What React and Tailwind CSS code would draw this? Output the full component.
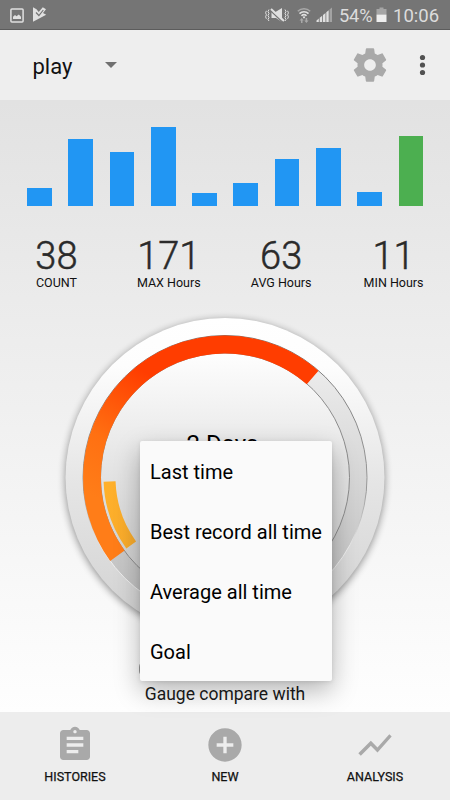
import React from "react";

const BARS = [18.5, 67.5, 54.5, 79.5, 13.5, 23, 47, 58.5, 14.5, 70.5];

const STATS = [
  { value: "38", label: "COUNT", cell: "w-[112px]" },
  { value: "171", label: "MAX Hours", cell: "w-[113px]" },
  { value: "63", label: "AVG Hours", cell: "w-[112px]" },
  { value: "11", label: "MIN Hours", cell: "w-[113px]" },
];

const MENU = ["Last time", "Best record all time", "Average all time", "Goal"];

const TABS = [
  {
    label: "HISTORIES",
    path: "M19 3h-4.18C14.4 1.84 13.3 1 12 1c-1.3 0-2.4.84-2.82 2H5c-1.1 0-2 .9-2 2v14c0 1.1.9 2 2 2h14c1.1 0 2-.9 2-2V5c0-1.1-.9-2-2-2zm-7 0c.55 0 1 .45 1 1s-.45 1-1 1-1-.45-1-1 .45-1 1-1zm2 14H7v-2h7v2zm3-4H7v-2h10v2zm0-4H7V7h10v2z",
  },
  {
    label: "NEW",
    path: "M12 2C6.48 2 2 6.48 2 12s4.48 10 10 10 10-4.48 10-10S17.52 2 12 2zm5 11h-4v4h-2v-4H7v-2h4V7h2v4h4v2z",
  },
  {
    label: "ANALYSIS",
    path: "M3.5 18.49l6-6.01 4 4L22 6.92l-1.41-1.41-7.09 7.97-4-4L2 16.99z",
  },
];

function polar(r, deg) {
  const a = (deg * Math.PI) / 180;
  return `${(160 + r * Math.cos(a)).toFixed(2)} ${(160 + r * Math.sin(a)).toFixed(2)}`;
}

function arc(r, from, to) {
  return `M${polar(r, from)}A${r} ${r} 0 ${to - from > 180 ? 1 : 0} 1 ${polar(r, to)}`;
}

function StatusBar() {
  return (
    <div className="flex h-[30px] shrink-0 items-center border-b border-[#5c5c5c] bg-[#757575] pl-[10px] pr-[10px] text-[#dcdcdc]">
      <svg className="mt-[1px]" width="14" height="15" viewBox="0 0 14 15">
        <rect x="0.9" y="0.9" width="12.2" height="13.2" rx="1" fill="none" stroke="#e0e0e0" strokeWidth="1.5" />
        <path d="M3 11V8.7L5 7l1.5 1.2L8.8 6.5 11 8.7V11z" fill="#e0e0e0" />
      </svg>
      <svg className="ml-[9px]" width="14" height="15" viewBox="0 0 14 15">
        <path d="M0 .3L3.5 2.2 5.7 5 9.8.3 13 2.3 10 6l3.2 1.7L0 14.8z" fill="#e0e0e0" />
        <path d="M3 5.5l2.9 3L10.3 3" fill="none" stroke="#757575" strokeWidth="1.2" />
      </svg>
      <div className="flex-1" />
      <svg className="mt-[1px]" width="24" height="17" viewBox="0 0 24 17">
        <path d="M6.5 5.2h3.5L17 1v14l-6-4H6.5z" fill="#e0e0e0" />
        <path d="M4.6 2.8L18 15.4" stroke="#757575" strokeWidth="1.4" />
        <path d="M6 2L19 14" stroke="#e0e0e0" strokeWidth="2" />
        <path d="M4 2.5l-1 2 1 2-1 2 1 2-1 2 1 1.5M1.4 3.8l-.8 2 .8 2-.8 2 .8 2M20 2.5l1 2-1 2 1 2-1 2 1 2-1 1.5M22.6 3.8l.8 2-.8 2 .8 2-.8 2" fill="none" stroke="#e0e0e0" strokeWidth="1" />
      </svg>
      <svg className="mt-[1px] ml-[8px]" width="14" height="17" viewBox="0 0 14 17">
        <path d="M.8 4.2a9 9 0 0112.4 0" fill="none" stroke="#a9a9a9" strokeWidth="1.5" />
        <path d="M2.5 6.6a6.4 6.4 0 019 0M4.5 8.8a3.6 3.6 0 015 0" fill="none" stroke="#e0e0e0" strokeWidth="1.6" />
        <circle cx="7" cy="10.3" r="1.1" fill="#e0e0e0" />
        <path d="M2.5 13.5L4.7 11l2 2.5H5.5V16H4v-2.5zM7.3 13.5h1.3V11h1.6v2.5h1.3L9.4 16z" fill="#a9a9a9" />
      </svg>
      <svg className="mt-[1px] ml-[5px]" width="17" height="16" viewBox="0 0 17 16">
        <path d="M.5 15v-1.6l2.3-1.9V15zM3.7 15v-4.2l2.5-2V15zM7 15V8l2.5-2v9zM10.3 15V5.2l2.4-2V15z" fill="#e0e0e0" />
        <path d="M13.5 15V2.5L16 .5V15z" fill="#a3a3a3" />
      </svg>
      <span className="ml-[6px] w-[34px] whitespace-nowrap pt-[2px] text-[18.3px] leading-[30px] tracking-[-0.2px]">54%</span>
      <svg className="mt-[1px] ml-[3px]" width="11" height="16" viewBox="0 0 11 16">
        <path d="M.5 7.5V2h3V.5h4V2h3v5.5z" fill="#a5a5a5" />
        <path d="M.5 7.5h10V15H.5z" fill="#eee" />
      </svg>
      <span className="ml-[6px] w-[47px] whitespace-nowrap pt-[2px] text-[18.5px] leading-[30px]">10:06</span>
    </div>
  );
}

function Toolbar() {
  return (
    <div className="flex h-[70px] shrink-0 items-center bg-[#eeeeee]">
      <span className="ml-[32.5px] w-[72.5px] pt-[3px] text-[22px] leading-[30px] text-[#111]">play</span>
      <svg className="-mt-[1px]" width="12" height="6" viewBox="0 0 12 6">
        <path d="M0 0h12L6 6z" fill="#707070" />
      </svg>
      <div className="flex-1" />
      <svg width="40" height="40" viewBox="0 0 24 24" fill="#a9a9a9">
        <path d="M19.43 12.98c.04-.32.07-.64.07-.98s-.03-.66-.07-.98l2.11-1.65c.19-.15.24-.42.12-.64l-2-3.46c-.12-.22-.39-.3-.61-.22l-2.49 1c-.52-.4-1.08-.73-1.69-.98l-.38-2.65C14.46 2.18 14.25 2 14 2h-4c-.25 0-.46.18-.49.42l-.38 2.65c-.61.25-1.17.59-1.69.98l-2.49-1c-.23-.09-.49 0-.61.22l-2 3.46c-.13.22-.07.49.12.64l2.11 1.65c-.04.32-.07.65-.07.98s.03.66.07.98l-2.11 1.65c-.19.15-.24.42-.12.64l2 3.46c.12.22.39.3.61.22l2.49-1c.52.4 1.08.73 1.69.98l.38 2.65c.03.24.24.42.49.42h4c.25 0 .46-.18.49-.42l.38-2.65c.61-.25 1.17-.59 1.69-.98l2.49 1c.23.09.49 0 .61-.22l2-3.46c.12-.22.07-.49-.12-.64l-2.11-1.65zM12 15.5c-1.93 0-3.5-1.57-3.5-3.5s1.57-3.5 3.5-3.5 3.5 1.57 3.5 3.5-1.57 3.5-3.5 3.5z" />
      </svg>
      <svg className="ml-[29px] mr-[24px]" width="7" height="22" viewBox="0 0 7 22" fill="#515151">
        <circle cx="3.5" cy="3.5" r="2.6" />
        <circle cx="3.5" cy="11" r="2.6" />
        <circle cx="3.5" cy="18.5" r="2.6" />
      </svg>
    </div>
  );
}

function Gauge() {
  return (
    <svg className="ml-[65px] block overflow-visible" width="320" height="320" viewBox="0 0 320 320">
      <defs>
        <linearGradient id="rim" x1="0" y1="0" x2="0" y2="1">
          <stop offset="0" stopColor="#ffffff" />
          <stop offset="0.15" stopColor="#fdfdfd" />
          <stop offset="0.5" stopColor="#e6e6e6" />
          <stop offset="1" stopColor="#d0d0d0" />
        </linearGradient>
        <linearGradient id="track" x1="0" y1="0" x2="0" y2="1">
          <stop offset="0" stopColor="#f2f2f2" />
          <stop offset="0.5" stopColor="#d6d6d6" />
          <stop offset="1" stopColor="#bcbcbc" />
        </linearGradient>
        <linearGradient id="face" x1="0" y1="0" x2="0" y2="1">
          <stop offset="0" stopColor="#fefefe" />
          <stop offset="0.5" stopColor="#e2e2e2" />
          <stop offset="1" stopColor="#c8c8c8" />
        </linearGradient>
        <linearGradient id="edge" x1="0" y1="0" x2="0" y2="1">
          <stop offset="0" stopColor="#777777" />
          <stop offset="0.55" stopColor="#999999" />
          <stop offset="0.75" stopColor="#eeeeee" />
        </linearGradient>
        <linearGradient id="heat" gradientUnits="userSpaceOnUse" x1="30" y1="180" x2="110" y2="45">
          <stop offset="0" stopColor="#ff7d18" />
          <stop offset="0.35" stopColor="#ff7012" />
          <stop offset="0.85" stopColor="#ff3d00" />
        </linearGradient>
        <linearGradient id="amber" x1="0" y1="0" x2="1" y2="1">
          <stop offset="0" stopColor="#ffb02a" />
          <stop offset="1" stopColor="#f8ab2c" />
        </linearGradient>
        <filter id="soft" x="-10%" y="-10%" width="120%" height="120%">
          <feGaussianBlur stdDeviation="4.5" />
        </filter>
      </defs>
      <circle cx="160" cy="161.5" r="159" fill="#000" opacity="0.48" filter="url(#soft)" />
      <circle cx="160" cy="159.5" r="159.5" fill="url(#rim)" />
      <g transform="translate(0 -0.5)">
        <circle cx="160" cy="160" r="142" fill="url(#track)" stroke="url(#edge)" strokeWidth="1" />
        <circle cx="160" cy="160" r="124.5" fill="url(#face)" stroke="#8c8c8c" strokeWidth="1" />
        <path d={arc(133, 144, 311.2)} fill="none" stroke="url(#heat)" strokeWidth="17.8" />
        <path d={arc(115.5, 144.3, 178)} fill="none" stroke="url(#amber)" strokeWidth="12" />
      </g>
      <text x="157.5" y="134" textAnchor="middle" fontSize="24" fill="#000">2 Days</text>
    </svg>
  );
}

export default function App() {
  return (
    <div className="relative flex h-[800px] w-[450px] flex-col overflow-hidden bg-[#eeeeee] font-[Roboto,sans-serif]">
      <StatusBar />
      <Toolbar />
      <main className="flex h-[612px] shrink-0 flex-col bg-linear-to-b from-[#e2e2e2] to-[#fefefe]">
        <div className="ml-[27px] flex h-[106px] shrink-0 items-end gap-[16.6px]">
          {BARS.map((h, i) => (
            <div
              key={i}
              className={i === 9 ? "w-[24.7px] bg-[#4caf50]" : "w-[24.7px] bg-[#2196f3]"}
              style={{ height: h }}
            />
          ))}
        </div>
        <div className="mt-[31px] ml-[0.5px] flex h-[80.5px] shrink-0">
          {STATS.map((s) => (
            <div key={s.label} className={`flex flex-col items-center ${s.cell}`}>
              <span className="h-[38px] text-[38px] leading-[38px] font-light text-[#2a2a2a] [-webkit-text-stroke:0.5px_#2a2a2a]">{s.value}</span>
              <span className="text-[12.5px] leading-[15px] text-[#111]">{s.label}</span>
            </div>
          ))}
        </div>
        <div className="h-[362.5px] shrink-0">
          <Gauge />
          <div className="mt-[23px] h-[16px]">
            <div className="ml-[139px] h-[16px] w-[170px] rounded-[6px] bg-[#999]" />
          </div>
        </div>
        <div className="-mt-[1px] shrink-0 text-center text-[17.5px] leading-[30px] text-[#1a1a1a]">Gauge compare with</div>
      </main>
      <nav className="flex h-[88px] shrink-0 bg-[#ededed]">
        {TABS.map((t) => (
          <div key={t.label} className="flex flex-1 flex-col items-center pt-[13px]">
            <svg width="40" height="40" viewBox="0 0 24 24" fill="#a9a9a9">
              <path d={t.path} />
            </svg>
            <span className="mt-[4px] text-[12.5px] leading-[16px] text-[#111] [-webkit-text-stroke:0.25px_#111]">{t.label}</span>
          </div>
        ))}
      </nav>
      <div className="absolute top-[441px] left-[140px] flex h-[240px] w-[192px] flex-col rounded-[2px] bg-[#fafafa] shadow-[0_10px_26px_rgba(0,0,0,0.28),0_1px_4px_rgba(0,0,0,0.1)]">
        {MENU.map((m) => (
          <div key={m} className="flex h-[60px] items-center pt-[2px] pl-[10px] text-[20px] whitespace-nowrap text-black">
            {m}
          </div>
        ))}
      </div>
    </div>
  );
}
